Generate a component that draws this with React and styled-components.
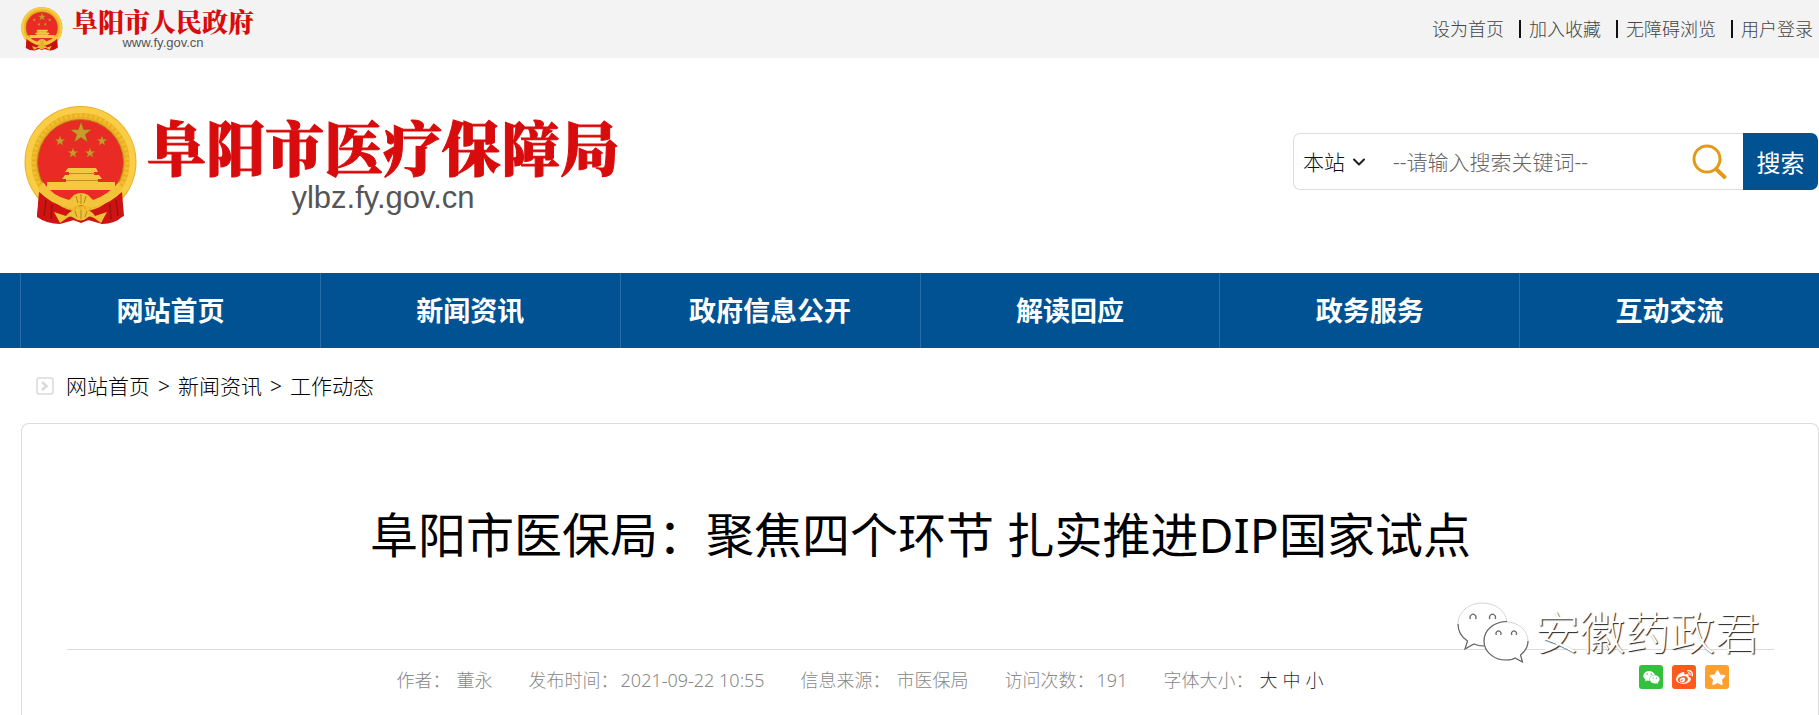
import React from 'react';
import styled, { createGlobalStyle } from 'styled-components';
import { ChevronDown } from 'lucide-react';
import { FaWeixin, FaWeibo, FaStar } from 'react-icons/fa';

const topLinks = ['设为首页', '加入收藏', '无障碍浏览', '用户登录'];

const navItems = ['网站首页', '新闻资讯', '政府信息公开', '解读回应', '政务服务', '互动交流'];

const crumbs = ['网站首页', '新闻资讯', '工作动态'];

const details = [
    { id: 1, label: '作者：', value: '董永', spaced: true },
    { id: 2, label: '发布时间：', value: '2021-09-22 10:55' },
    { id: 3, label: '信息来源：', value: '市医保局', spaced: true },
    { id: 4, label: '访问次数：', value: '191' }
];

const shares = [
    { name: '微信', color: '#35bf3e', Icon: FaWeixin },
    { name: '微博', color: '#ff5a1c', Icon: FaWeibo },
    { name: 'QQ空间', color: '#ff9f2e', Icon: FaStar }
];

const STAR = '0,-10 2.4,-3.1 9.5,-3.1 3.8,1.2 5.9,8.1 0,4 -5.9,8.1 -3.8,1.2 -9.5,-3.1 -2.4,-3.1';

function Emblem({ width }) {
    return (
        <EmblemSvg viewBox="0 0 114 119" $width={width} aria-hidden="true">
            <path d="M16 82 L13 111 Q23 118 36 118 L57 112 L78 118 Q91 118 99 110 L97 82 Z" fill="#cf1313" />
            <circle cx="56.5" cy="56" r="56" fill="#e9ae22" />
            <circle cx="56.5" cy="56" r="52" fill="none" stroke="#f9cd45" strokeWidth="6" />
            <circle cx="56.5" cy="56" r="47" fill="none" stroke="#f2bd2e" strokeWidth="4" strokeDasharray="3 2" />
            <circle cx="56.5" cy="56.5" r="43" fill="#ea2a24" stroke="#b57a16" />
            <g fill="#c99a2b" stroke="#8f5a10" strokeWidth="0.5">
                <polygon points={STAR} transform="translate(57 27) scale(1.15)" />
                <polygon points={STAR} transform="translate(36 35) scale(.55)" />
                <polygon points={STAR} transform="translate(78 35) scale(.55)" />
                <polygon points={STAR} transform="translate(49 47) scale(.55)" />
                <polygon points={STAR} transform="translate(66 47) scale(.55)" />
            </g>
            <path d="M44 62 H72 L74 66 H70 V69 H75 L78 73 H74 V76 H91 V84 H23 V76 H42 V73 H38 L41 69 H45 V66 H41 Z" fill="#f4c843" />
            <path d="M45 67.500 H71 M42 74.500 H74" stroke="#c98a1d" />
            <path d="M15 86 L38 101 Q56 110 76 101 L98 86 L100 110 L82 117 L70 112 L57 117 L44 112 L30 117 L13 110 Z" fill="#cf1313" />
            <path d="M22 94 L20 110 M28 98 L27 113 M92 94 L94 110 M86 98 L87 113" stroke="#9c120d" strokeWidth="1.500" />
            <path d="M14 84 Q25 98 46 102 L57 99 L68 102 Q89 97 99 84 L95 76 Q84 89 69 94 L64 89 Q57 85 50 89 L45 94 Q28 90 19 76 Z" fill="#f2c43a" />
            <path d="M30 106 L42 110 Q47 103 57 103 Q67 103 71 110 L83 106 L77 117 L70 112 Q65 109 63 112 Q57 117 50 112 Q46 109 43 112 L36 117 Z" fill="#eec238" />
            <path d="M57 88 V98 M52 90 L54 97 M62 90 L60 97 M57 104 V113 M51 105 L53 111 M63 105 L61 111" stroke="#b9861b" strokeWidth="1" />
        </EmblemSvg>
    );
}

function WatermarkIcon() {
    return (
        <svg width="72" height="62" viewBox="0 0 72 62" aria-hidden="true">
            <g fill="#fff" stroke="#c4c4c4" strokeWidth="0.7">
                <path d="M25.500 1 C11.500 1 1 10.500 1 22 C1 29 4.500 35 10.500 39 L8 47 L17 42 C20 43.500 23 44 27 44 L38 40 L50 20 C49 9 38 1 25.500 1 Z" />
                <path d="M49 20 C36.500 20 27 28.500 27 39 C27 50 37 58 49 58 C53 58 56 57.500 58 56 L65.500 60 L63.500 53 C68 49.500 71 45 71 39 C71 28.500 61.500 20 49 20 Z" />
            </g>
            <path d="M1 22 C1 29 4.500 35 10.500 39 L8 47 L17 42 C20 43.500 23 44 27 44 M50 19.500 C36.500 19.500 27 28.500 27 39 C27 50 37 58 49 58 C53 58 56 57.500 58 56 L65.500 60 L63.500 53 C68 49.500 71 45 71 39" fill="none" stroke="#666" strokeWidth="1.200" />
            <g fill="none" stroke="#666" strokeWidth="1.200">
                <path d="M13.500 17 A3 3 0 1 1 18.500 17" />
                <path d="M33 17 A3 3 0 1 1 38 17" />
                <path d="M39.500 33 A2.500 2.500 0 1 1 43.500 33" />
                <path d="M55 33 A2.500 2.500 0 1 1 59 33" />
            </g>
        </svg>
    );
}

function App() {
    return (
        <Page>
            <GlobalStyle />

            <TopBar>
                <Logo href="#">
                    <Emblem width={42} />
                    <LogoText>
                        <LogoName $size={26} $line={28}>阜阳市人民政府</LogoName>
                        <LogoUrl $size={13} $line={16}>www.fy.gov.cn</LogoUrl>
                    </LogoText>
                </Logo>
                <TopLinks>
                    {topLinks.map(text => (
                        <li key={text}><a href="#">{text}</a></li>
                    ))}
                </TopLinks>
            </TopBar>

            <Header>
                <Logo href="#">
                    <Emblem width={114} />
                    <LogoText $gap={6}>
                        <LogoName $size={59} $line={58} $stroke={1}>阜阳市医疗保障局</LogoName>
                        <LogoUrl $size={31} $line={34}>ylbz.fy.gov.cn</LogoUrl>
                    </LogoText>
                </Logo>
                <SearchForm onSubmit={e => e.preventDefault()}>
                    <SearchBox>
                        <Scope>
                            <select aria-label="搜索范围">
                                <option>本站</option>
                            </select>
                            <ChevronDown size={20} strokeWidth={2.5} />
                        </Scope>
                        <Keyword type="text" aria-label="搜索关键词" placeholder="--请输入搜索关键词--" />
                        <svg width="36" height="36" viewBox="0 0 36 36" fill="none" stroke="#e39b17" aria-hidden="true">
                            <circle cx="15" cy="15" r="13" strokeWidth="3" />
                            <path d="M24 25 L32.500 33" strokeWidth="4" strokeLinecap="round" />
                        </svg>
                    </SearchBox>
                    <SearchButton type="submit">搜索</SearchButton>
                </SearchForm>
            </Header>

            <Nav>
                {navItems.map(text => <NavLink key={text} href="#">{text}</NavLink>)}
            </Nav>

            <Breadcrumb>
                <svg width="18" height="18" viewBox="0 0 18 18" fill="none" stroke="#d9d9d9" aria-hidden="true">
                    <rect x="1" y="1" width="16" height="16" rx="2" strokeWidth="1.500" />
                    <path d="M6 5 L10.500 9 L6 13" strokeWidth="2.500" />
                </svg>
                {crumbs.map((text, i) => (
                    <React.Fragment key={text}>
                        {i > 0 && <span>&gt;</span>}
                        <a href="#">{text}</a>
                    </React.Fragment>
                ))}
            </Breadcrumb>

            <Article>
                <Title>阜阳市医保局：聚焦四个环节 扎实推进DIP国家试点</Title>
                <Meta>
                    <Details>
                        {details.map(d => (
                            <Detail key={d.id} $spaced={d.spaced}>
                                <span>{d.label}</span>
                                <span>{d.value}</span>
                            </Detail>
                        ))}
                        <Detail $spaced>
                            <span>字体大小：</span>
                            <Sizes>
                                <button type="button">大</button>
                                <button type="button">中</button>
                                <button type="button">小</button>
                            </Sizes>
                        </Detail>
                    </Details>
                    <Shares>
                        {shares.map(({ name, color, Icon }) => (
                            <ShareButton key={name} type="button" aria-label={name} $color={color}>
                                <Icon size={17} />
                            </ShareButton>
                        ))}
                    </Shares>
                </Meta>
                <Watermark>
                    <WatermarkIcon />
                    <span>安徽药政君</span>
                </Watermark>
            </Article>
        </Page>
    );
}

const GlobalStyle = createGlobalStyle`
    * {
        box-sizing: border-box;
    }

    body {
        margin: 0;
        background: #fff;
        color: #000;
        font-family: "Noto Sans", "Noto Sans CJK SC", sans-serif;
    }

    a {
        color: inherit;
        text-decoration: none;
    }

    button, input, select {
        font-family: inherit;
    }

    svg {
        flex: none;
    }
`;

const Page = styled.div`
    display: flex;
    flex-direction: column;
    min-height: 100vh;
`;

const TopBar = styled.div`
    display: flex;
    align-items: center;
    justify-content: space-between;
    height: 58px;
    padding: 0 6px 0 21px;
    background: #f3f3f3;
`;

const Logo = styled.a`
    display: flex;
    align-items: center;
    gap: 9px;
`;

const EmblemSvg = styled.svg`
    width: ${props => props.$width}px;
`;

const LogoText = styled.span`
    display: flex;
    flex-direction: column;
    align-items: center;
    gap: ${props => props.$gap || 0}px;
`;

const LogoName = styled.strong`
    color: #d80c0c;
    font-family: "Noto Serif CJK SC", "Noto Sans CJK SC", serif;
    font-size: ${props => props.$size}px;
    font-weight: 900;
    line-height: ${props => props.$line}px;
    white-space: nowrap;
    -webkit-text-stroke: ${props => props.$stroke || 0}px #d80c0c;
`;

const LogoUrl = styled.span`
    color: #555;
    font-family: "Liberation Sans", sans-serif;
    font-size: ${props => props.$size}px;
    line-height: ${props => props.$line}px;
`;

const TopLinks = styled.ul`
    display: flex;
    margin: 0;
    padding: 0;
    list-style: none;
    color: #444;
    font-size: 18px;
    font-weight: 300;
    line-height: 18px;

    li + li {
        margin-left: 15px;
        padding-left: 8px;
        border-left: 2px solid #111;
    }
`;

const Header = styled.header`
    display: flex;
    align-items: center;
    justify-content: space-between;
    height: 215px;
    padding: 0 1px 0 24px;
`;

const SearchForm = styled.form`
    display: flex;
    width: 525px;
    height: 57px;
    margin-bottom: 8px;
`;

const SearchBox = styled.div`
    display: flex;
    flex: 1;
    align-items: center;
    min-width: 0;
    padding: 0 15px 0 9px;
    border: 1px solid #ddd;
    border-right: 0;
    border-radius: 7px 0 0 7px;
`;

const Scope = styled.label`
    display: flex;
    align-items: center;
    color: #222;

    select {
        width: 66px;
        padding: 0;
        border: 0;
        appearance: none;
        background: none;
        color: #111;
        font-size: 21px;
        font-weight: 300;
    }

    svg {
        margin-left: -20px;
        pointer-events: none;
    }
`;

const Keyword = styled.input`
    flex: 1;
    min-width: 0;
    margin-left: 24px;
    padding: 0;
    border: 0;
    outline: 0;
    font-size: 21px;
    font-weight: 300;

    &::placeholder {
        color: #666;
    }
`;

const SearchButton = styled.button`
    width: 75px;
    padding: 0;
    border: 0;
    border-radius: 0 7px 7px 0;
    background: #005293;
    color: #fff;
    font-size: 24px;
`;

const Nav = styled.nav`
    display: grid;
    grid-template-columns: repeat(6, 1fr);
    height: 75px;
    padding-left: 20px;
    background: #005293;
`;

const NavLink = styled.a`
    border-left: 1px solid #2a6da5;
    color: #fff;
    font-size: 27px;
    font-weight: 700;
    line-height: 75px;
    text-align: center;
`;

const Breadcrumb = styled.nav`
    display: flex;
    align-items: center;
    gap: 8px;
    height: 75px;
    padding-left: 36px;
    font-size: 21px;
    font-weight: 300;
    line-height: 24px;

    svg {
        margin-right: 4px;
    }
`;

const Article = styled.article`
    position: relative;
    flex: 1;
    margin-left: 21px;
    padding: 81px 44px 0 45px;
    border: 1px solid #ddd;
    border-bottom: 0;
    border-radius: 8px 8px 0 0;
`;

const Title = styled.h1`
    margin: 0;
    padding-bottom: 84px;
    border-bottom: 1px solid #ddd;
    font-size: 48px;
    font-weight: 400;
    line-height: 60px;
    text-align: center;
`;

const Meta = styled.div`
    display: flex;
    align-items: center;
    height: 60px;
    padding: 0 45px 0 14px;
    color: #888;
    font-size: 18px;
    font-weight: 300;
    line-height: 24px;
`;

const Details = styled.div`
    display: flex;
    flex: 1;
    justify-content: center;
    gap: 36px;
`;

const Detail = styled.div`
    display: flex;
    gap: ${props => props.$spaced ? 6 : 2}px;
`;

const Sizes = styled.span`
    display: flex;
    gap: 5px;

    button {
        padding: 0;
        border: 0;
        background: none;
        color: #333;
        font-size: 18px;
        font-weight: 300;
        line-height: 24px;
    }
`;

const Shares = styled.div`
    display: flex;
    gap: 9px;
    margin-bottom: 6px;
`;

const ShareButton = styled.button`
    display: flex;
    align-items: center;
    justify-content: center;
    width: 24px;
    height: 24px;
    padding: 0;
    border: 0;
    border-radius: 3px;
    background: ${props => props.$color};
    color: #fff;
`;

/* floats over the rule under the title */
const Watermark = styled.div`
    position: absolute;
    top: 177px;
    right: 58px;
    display: flex;
    align-items: center;
    gap: 6px;
    color: #fff;
    font-size: 45px;
    font-weight: 300;
    line-height: 64px;
    text-shadow: 1px 1px 1px #222;
    pointer-events: none;
`;

export default App;
